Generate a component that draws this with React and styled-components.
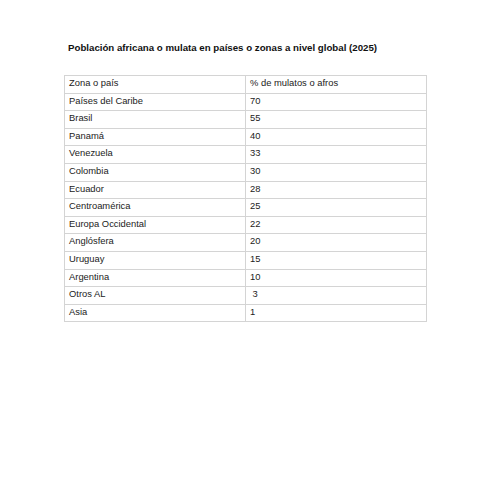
import React from 'react';
import styled, { createGlobalStyle } from 'styled-components';

const GlobalStyle = createGlobalStyle`
  html, body {
    margin: 0;
    padding: 0;
    background: #fff;
  }
  body {
    font-family: 'Liberation Sans', Arial, sans-serif;
    color: #1a1a1a;
  }
`;

const Page = styled.div`
  width: 494px;
  height: 494px;
  padding: 42px 0 0 64px;
  box-sizing: border-box;
`;

const Title = styled.h1`
  margin: 0 0 21px 4px;
  font-size: 9.7px;
  font-weight: bold;
  line-height: 12px;
  color: #111;
`;

const Table = styled.table`
  width: 363px;
  border-collapse: collapse;
  table-layout: fixed;
  border: 1px solid #cfcfcf;
`;

const Cell = styled.td`
  height: 17.6px;
  padding: 1px 4px 0;
  box-sizing: border-box;
  border: 1px solid #d4d4d4;
  font-size: 9.4px;
  line-height: 12px;
  vertical-align: top;
  white-space: pre;
  width: ${(p) => (p.$first ? '181px' : 'auto')};
  color: #222;
`;

const rows = [
  ['Zona o país', '% de mulatos o afros'],
  ['Países del Caribe', '70'],
  ['Brasil', '55'],
  ['Panamá', '40'],
  ['Venezuela', '33'],
  ['Colombia', '30'],
  ['Ecuador', '28'],
  ['Centroamérica', '25'],
  ['Europa Occidental', '22'],
  ['Anglósfera', '20'],
  ['Uruguay', '15'],
  ['Argentina', '10'],
  ['Otros AL', ' 3'],
  ['Asia', '1'],
];

export default function App() {
  return (
    <>
      <GlobalStyle />
      <Page>
        <Title>Población africana o mulata en países o zonas a nivel global (2025)</Title>
        <Table>
          <tbody>
            {rows.map(([zone, pct]) => (
              <tr key={zone}>
                <Cell $first>{zone}</Cell>
                <Cell>{pct}</Cell>
              </tr>
            ))}
          </tbody>
        </Table>
      </Page>
    </>
  );
}
